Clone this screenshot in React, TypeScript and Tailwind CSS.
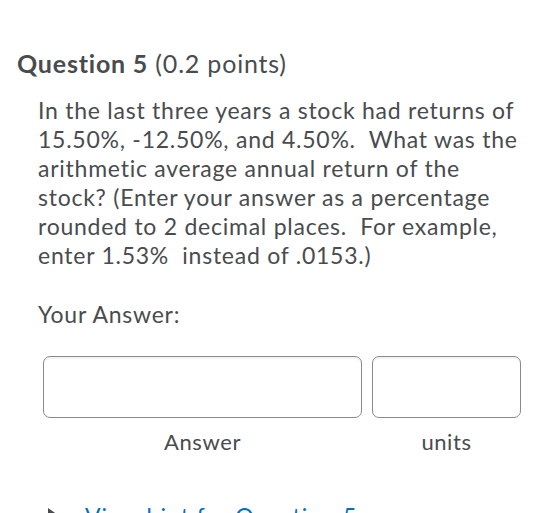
export default function App() {
  return (
    <div
      className="w-[539px] h-[513px] overflow-hidden bg-white text-[#494c4e]"
      style={{ fontFamily: "Lato, 'Liberation Sans', sans-serif" }}
    >
      <div className="pt-[47px] pl-[17px]">
        <h2 className="text-[25px] leading-[32px] tracking-[0.8px] whitespace-nowrap">
          <strong className="font-bold">Question 5</strong> (0.2 points)
        </h2>
        <div className="pl-[21px] pt-[17px]">
          <p className="text-[23px] leading-[29px] tracking-[0.75px] whitespace-nowrap">
            In the last three years a stock had returns of
            <br />
            15.50%, -12.50%, and 4.50%.&nbsp; What was the
            <br />
            arithmetic average annual return of the
            <br />
            stock? (Enter your answer as a percentage
            <br />
            rounded to 2 decimal places.&nbsp; For example,
            <br />
            enter 1.53%&nbsp; instead of .0153.)
          </p>
          <p className="mt-[30px] text-[23px] leading-[29px] tracking-[0.75px]">Your Answer:</p>
        </div>
        <div className="mt-[27px] ml-[26px] flex gap-[10px] w-[478px]">
          <div className="flex flex-col items-center w-[319px]">
            <div className="w-full h-[62px] rounded-[7px] border border-[#8a8a8a] bg-white shadow-[inset_0_2px_0_0_#f1f3f5]" />
            <span className="mt-[11px] text-[22px] leading-[26px] tracking-[0.6px]">Answer</span>
          </div>
          <div className="flex flex-col items-center w-[149px]">
            <div className="w-full h-[62px] rounded-[7px] border border-[#8a8a8a] bg-white shadow-[inset_0_2px_0_0_#f1f3f5]" />
            <span className="mt-[11px] text-[22px] leading-[26px] tracking-[0.6px]">units</span>
          </div>
        </div>
        <div className="mt-[47px] ml-[30px] flex items-start gap-[26px]">
          <svg className="mt-[5px]" width="12" height="16" viewBox="0 0 12 16">
            <path d="M1 1 L11 8 L1 15 Z" fill="#494c4e" />
          </svg>
          <a className="text-[23px] leading-[29px] tracking-[1px] text-[#006fbf] whitespace-nowrap">
            View hint for Question 5
          </a>
        </div>
      </div>
    </div>
  );
}
